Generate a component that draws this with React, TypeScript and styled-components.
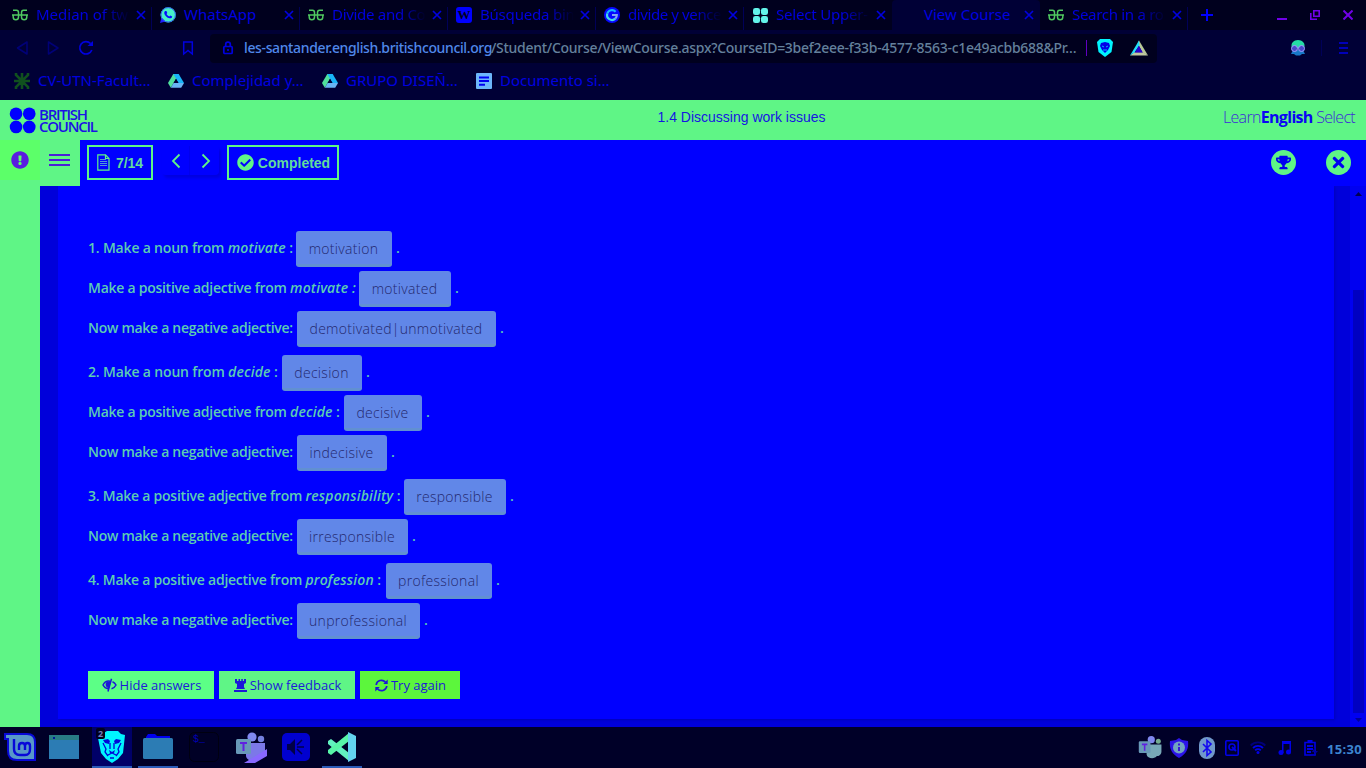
import React from 'react';
import styled, { createGlobalStyle } from 'styled-components';
import { FaCheckCircle, FaExclamationCircle, FaTrophy, FaTimes } from 'react-icons/fa';

const GREEN = '#5ff586';
const UI = '"Noto Sans", "Open Sans", sans-serif';

const Global = createGlobalStyle`
  * { box-sizing: border-box; }
  body { margin: 0; background: #0000ff; overflow: hidden; }
  svg { display: block; flex: none; }
`;

const Screen = styled.div`
  width: 1366px; height: 768px; display: flex; flex-direction: column; overflow: hidden;
  font-family: ${UI};
`;

/* Browser chrome */
const TabStrip = styled.div`
  height: 30px; flex: none; display: flex; padding-left: 4px; background: #00001e;
`;
const Tab = styled.div<{ $active?: boolean }>`
  width: 148px; height: 30px; display: flex; align-items: center; padding: 0 6px 0 8px;
  background: ${p => (p.$active ? '#000036' : 'transparent')};
  border-radius: ${p => (p.$active ? '4px 4px 0 0' : '0')};
`;
const TabRule = styled.div<{ $on: boolean }>`
  width: 1px; height: 23px; margin: 7px 0 0 -1px; background: ${p => (p.$on ? '#000058' : 'transparent')};
`;
const TabTitle = styled.div<{ $fade?: boolean; $ls?: number }>`
  width: 97px; margin: 0 3px 0 8px; padding-bottom: 2px; white-space: nowrap; font-size: 15px; line-height: 22px;
  letter-spacing: ${p => p.$ls ?? 0}px; color: #0000e0;
  mask-image: ${p => (p.$fade ? 'linear-gradient(90deg, #000 68%, transparent 97%)' : 'none')};
`;
const Slot = styled.div`
  width: 16px; height: 16px; flex: none; display: flex; align-items: center; justify-content: center;
`;
const WindowControls = styled.div`
  margin-left: auto; display: flex; align-items: center; gap: 23px; padding-right: 13px;
`;
const PlusSlot = styled.div`
  display: flex; align-items: center; padding-left: 12px;
`;
const NavBar = styled.div`
  height: 36px; flex: none; display: flex; align-items: center; background: #000036; padding-left: 15px;
`;
const NavIcons = styled.div`
  width: 195px; display: flex; align-items: center; gap: 16px;
`;
const BookmarkSlot = styled.div`
  margin-left: auto; margin-right: 14px;
`;
const UrlBox = styled.div`
  width: 947px; height: 29px; display: flex; align-items: center; background: #00001e; border-radius: 4px; padding-left: 12px;
`;
const UrlText = styled.div`
  width: 834px; margin-left: 10px; display: flex; font-size: 14px; line-height: 22px; white-space: nowrap; color: #64809c;
`;
const UrlHost = styled.span`
  width: 247px; color: #5088ea; font-weight: 500; letter-spacing: -0.37px;
`;
const UrlPath = styled.span`
  font-weight: 500; letter-spacing: -0.28px;
`;
const UrlRule = styled.div`
  width: 1px; height: 16px; margin-right: 10px; background: #6000c0;
`;
const NavRight = styled.div`
  margin-left: auto; display: flex; align-items: center; padding-right: 14px; gap: 14px;
`;
const ThinRule = styled.div`
  width: 1px; height: 16px; margin-left: 1px; background: #000058;
`;
const Bookmarks = styled.div`
  height: 34px; flex: none; display: flex; align-items: center; background: #000036; padding: 0 0 5px 14px;
`;
const Bookmark = styled.div<{ $w: number }>`
  width: ${p => p.$w}px; display: flex; align-items: center; gap: 8px; white-space: nowrap;
  font-size: 15px; line-height: 21px; color: #0000e0;
`;

/* Course page */
const Header = styled.header`
  height: 40px; flex: none; display: grid; grid-template-columns: 360px 1fr 360px; align-items: center;
  background: ${GREEN}; color: #0a0af0;
`;
const Brand = styled.div`
  display: flex; align-items: center; gap: 3px; padding-left: 9px;
`;
const BrandText = styled.div`
  font: 600 15px/12px "Open Sans", sans-serif; letter-spacing: -1.25px; color: #1c12e4;
`;
const Title = styled.div`
  text-align: center; font: 14px/20px "Liberation Sans", Arial, sans-serif; padding: 0 0 7px 117px; color: #1616e0;
  white-space: nowrap;
`;
const Product = styled.div`
  text-align: right; padding: 0 11px 7px 0; font: 300 16px/20px "Open Sans", sans-serif; letter-spacing: -0.68px; color: #3c2bd8;
  b { font-weight: 700; color: #0a06f4; }
`;
const Page = styled.div`
  height: 587px; flex: none; display: flex;
`;
const Side = styled.aside`
  width: 40px; background: ${GREEN};
`;
const Alert = styled.div`
  width: 40px; height: 40px; display: flex; align-items: center; justify-content: center; padding-right: 1px;
  background: #5cff69; color: #5a1ce0;
`;
const Main = styled.main`
  flex: 1; display: flex; flex-direction: column; background: #0000da;
`;
const Toolbar = styled.div`
  height: 46px; display: flex; background: #0000ff; padding-right: 15px;
`;
const Burger = styled.div`
  width: 40px; height: 46px; display: flex; flex-direction: column; align-items: center; gap: 3px; padding: 14px 2px 0 0; background: ${GREEN};
`;
const BurgerLine = styled.i`
  width: 21px; height: 2px; background: #4a1ed8;
`;
const Outlined = styled.div<{ $w: number }>`
  width: ${p => p.$w}px; height: 35px; margin-top: 5px; display: flex; align-items: center; justify-content: center;
  border: 2px solid ${GREEN}; color: #62dc9c; font: 700 14px/20px "Liberation Sans", Arial, sans-serif; white-space: nowrap;
`;
const Pager = styled.div`
  display: flex; height: 29px; margin: 6px 8px 0 9px; box-shadow: 2px 3px 3px #0000e0; border-radius: 4px;
`;
const PagerButton = styled.div`
  width: 28px; display: flex; align-items: center; justify-content: center; border-right: 1px solid #0000ee;
  &:last-child { border-right: 0; width: 29px; padding-left: 2px; }
`;
const Round = styled.div`
  width: 25px; height: 25px; border-radius: 50%; display: flex; align-items: center; justify-content: center;
  background: ${GREEN}; color: #0000f0;
`;
const RoundGroup = styled.div`
  margin-left: auto; margin-top: 10px; display: flex; gap: 30px;
`;
const Content = styled.div`
  height: 541px; display: flex; padding-left: 18px;
`;
const Panel = styled.section`
  width: 1276px; height: 533px; background: #0000ff; padding: 45px 30px 0; box-shadow: 1px 1px 3px #0000b8;
  clip-path: inset(0 -5px -5px 0);
`;
const Group = styled.div`
  display: flex; flex-direction: column; gap: 4px; margin-bottom: 8px;
`;
const Line = styled.div`
  height: 36px; display: flex; font: 600 14px/34px "Open Sans", sans-serif; color: #5ccdb2; white-space: nowrap;
`;
const Prompt = styled.div<{ $w: number; $ls: number }>`
  width: ${p => p.$w}px; letter-spacing: ${p => p.$ls}px;
  em { font-style: italic; letter-spacing: 0.14px; }
`;
const Answer = styled.div<{ $w: number }>`
  width: ${p => p.$w}px; height: 36px; margin-right: 4px; padding-right: 1px; border-radius: 3px; text-align: center;
  background: #6187e8; border-bottom: 3px solid #6190d2; color: #24276e;
  font: 300 14px/36px "Open Sans", sans-serif; letter-spacing: 0.3px;
`;
const Actions = styled.div`
  display: flex; gap: 5px; margin-top: 32px;
`;
const Action = styled.div<{ $w: number; $bg: string }>`
  width: ${p => p.$w}px; height: 28px; display: flex; align-items: center; justify-content: center; gap: 3px;
  padding-left: 1px; background: ${p => p.$bg}; color: #1c18d8; font: 13px/28px "Open Sans", sans-serif; white-space: nowrap;
`;
const Scrollbar = styled.div`
  width: 16px; height: 541px; margin-left: 16px; display: flex; flex-direction: column; align-items: center;
  padding-top: 6px; background: #0000f1;
`;
const Thumb = styled.div`
  width: 11px; height: 423px; margin: 94px 0 5px 1px; background: #0000c2;
`;

/* Desktop panel */
const Taskbar = styled.footer`
  height: 41px; flex: none; display: flex; background: #000028;
`;
const Task = styled.div<{ $w: number; $bg?: string; $line?: boolean }>`
  width: ${p => p.$w}px; height: 41px; display: flex; align-items: center; justify-content: center; position: relative;
  background: ${p => p.$bg ?? 'transparent'};
  border-bottom: 2px solid ${p => (p.$line ? '#2b5bb8' : 'transparent')};
`;
const Count = styled.span`
  position: absolute; left: 4px; top: 1px; width: 9px; height: 11px; border-radius: 2px; background: #00001e;
  font: 700 9px/11px "Noto Sans", sans-serif; text-align: center; color: #7878c0;
`;
const Tray = styled.div`
  margin-left: auto; display: flex; align-items: center;
`;
const TrayItem = styled.div<{ $w: number }>`
  width: ${p => p.$w}px; display: flex; align-items: center; justify-content: center;
`;
const Clock = styled.div`
  width: 41px; padding: 3px 0 0 2px; font: 700 13px/18px "Noto Sans", sans-serif; letter-spacing: 0.3px; color: #3c84d0;
`;

const Close = () => (
  <svg width="10" height="10" viewBox="0 0 10 10" stroke="#0000e0" strokeWidth="1.7"><path d="M1 1L9 9M9 1L1 9" /></svg>
);
const Gfg = () => (
  <svg width="16" height="12" viewBox="0 0 16 12" fill="none" stroke="#4fc860" strokeWidth="1.5">
    <path d="M0 6H16M1 1.200H4.500Q6.500 1.200 6.500 3.500V8Q6.500 10.800 3.800 10.800Q1.200 10.800 1.200 8V6M15 1.200H11.500Q9.500 1.200 9.500 3.500V8Q9.500 10.800 12.200 10.800Q14.800 10.800 14.800 8V6" />
  </svg>
);
const WhatsIcon = () => (
  <svg width="16" height="16" viewBox="0 0 16 16">
    <circle cx="8.2" cy="7.8" r="7.6" fill="#46efc8" /><path d="M0 16L1.5 10.5L5.5 14.5Z" fill="#2020ff" />
    <circle cx="8.2" cy="7.8" r="7.2" fill="none" stroke="#3060f0" />
    <path d="M5.2 4.1l1.2-.2.9 2-.8 1c.7 1.3 1.5 2 2.8 2.6l1-1 1.9 1c-.1 1.4-1.3 2-2.5 1.8-2.8-.6-5.2-3-5.5-5.4 0-.8.4-1.5 1-1.8Z" fill="#0808ff" />
  </svg>
);
const WikiIcon = () => (
  <svg width="16" height="16" viewBox="0 0 16 16"><rect width="16" height="16" rx="3" fill="#0000ff" />
    <text x="8" y="12.4" textAnchor="middle" fontFamily="Liberation Serif" fontSize="13" fontWeight="700" fill="#00001e">W</text></svg>
);
const GoogleIcon = () => (
  <svg width="16" height="16" viewBox="0 0 16 16"><circle cx="8" cy="8" r="8" fill="#0808ff" />
    <path d="M11.6 4.7A4.9 4.9 0 0 0 3.3 6.5" fill="none" stroke="#18b8ff" strokeWidth="2.2" />
    <path d="M3.3 6.5A4.9 4.9 0 0 0 11.3 11.6" fill="none" stroke="#42d8ea" strokeWidth="2.2" />
    <path d="M11.3 11.6A4.8 4.8 0 0 0 12.8 8H8" fill="none" stroke="#80a8f0" strokeWidth="2.2" /></svg>
);
const Dots = ({ size, color }: { size: number; color: string }) => (
  <svg width={size} height={size} viewBox="0 0 26 26" fill={color}>
    <circle cx="6.8" cy="6.5" r="6.1" /><circle cx="19.5" cy="6.5" r="6.1" /><circle cx="6.8" cy="19.2" r="6.1" /><circle cx="19.5" cy="19.2" r="6.1" />
  </svg>
);
const CloverIcon = () => (
  <svg width="15" height="15" viewBox="0 0 16 16" fill="#63f3ea">
    <rect width="7.5" height="7.5" rx="2.5" /><rect x="8.5" width="7.5" height="7.5" rx="2.5" /><rect y="8.5" width="7.5" height="7.5" rx="2.5" /><rect x="8.5" y="8.5" width="7.5" height="7.5" rx="2.5" />
  </svg>
);
const Drive = () => (
  <svg width="16" height="16" viewBox="0 0 16 16">
    <path d="M5.3 1H10.7L5.6 10L2.8 14.7L0 10Z" fill="#4fe09c" /><path d="M5.3 1H10.7L16 10H10.5Z" fill="#18b4f8" />
    <path d="M5.6 10H16L13.2 14.8H2.8Z" fill="#68b4f4" /><path d="M8 5.8L10.4 10H5.6Z" fill="#000036" />
  </svg>
);
const Doc = () => (
  <svg width="16" height="16" viewBox="0 0 16 16"><rect width="16" height="16" rx="1" fill="#6cb6fa" />
    <path d="M3 4.5H13M3 8H13M3 11.8H9" stroke="#0000f0" strokeWidth="2" /></svg>
);
const Utn = () => (
  <svg width="16" height="16" viewBox="0 0 16 16" fill="none" stroke="#10501e" strokeWidth="2.6">
    <path d="M8 0V16M0 8H16M2 0V2L8 8L14 2V0M2 16V14L8 8L14 14V16" /></svg>
);
const Vscode = () => (
  <svg width="30" height="30" viewBox="0 0 30 30">
    <path d="M1 9L4 7L22 21V29L1 12Z" fill="#62f2c0" /><path d="M1 21L4 23L22 9V1L1 18Z" fill="#58f5a8" />
    <path d="M21 0L29 4V26L21 30Z" fill="#63d4f0" />
  </svg>
);
const Teams = ({ size, banner }: { size: number; banner?: boolean }) => (
  <svg width={size} height={size} viewBox="0 0 32 32">
    <circle cx="17" cy="6" r="4.6" fill="#8088f0" /><circle cx="26" cy="8" r="3.2" fill={banner ? '#7480e0' : '#74ac90'} />
    <path d="M11 12H30V21C30 25 27 27 24 27C22 31 12 31 11 25Z" fill={banner ? '#7c78e8' : '#78a8b8'} />
    <rect x="1" y="8" width="15" height="15" rx="1.500" fill="#6898b8" />
    <path d="M5 12H12M8.500 12V20" stroke="#6020e0" strokeWidth="2" fill="none" />
    {banner && <path d="M9 32L32 18V25L20 32Z" fill="#8868ff" />}
  </svg>
);

const tabs = [
  { t: 'Median of tw', i: <Gfg />, f: true, ls: 0 }, { t: 'WhatsApp', i: <WhatsIcon /> },
  { t: 'Divide and Co', i: <Gfg />, f: true, ls: -0.3 },
  { t: 'Búsqueda bin', i: <WikiIcon />, f: true, ls: -0.2 }, { t: 'divide y vence', i: <GoogleIcon />, f: true, ls: -0.4 },
  { t: 'Select Upper-', i: <CloverIcon />, f: true, ls: -0.2 }, { t: 'View Course', i: null, a: true },
  { t: 'Search in a ro', i: <Gfg />, f: true, ls: -0.3 },
];

type Row = { pre: string; em?: string; post?: string; w: number; a: string; aw: number; ls?: number };
const NEG = 'Now make a negative adjective:';
const groups: Row[][] = [
  [
    { pre: '1. Make a noun from ', em: 'motivate', post: ' :', w: 208, a: 'motivation', aw: 96, ls: -0.19 },
    { pre: 'Make a positive adjective from ', em: 'motivate :', w: 271, a: 'motivated', aw: 92 },
    { pre: NEG, w: 209, a: 'demotivated|unmotivated', aw: 199, ls: -0.29 },
  ],
  [
    { pre: '2. Make a noun from ', em: 'decide', post: ' :', w: 194, a: 'decision', aw: 80, ls: -0.17 },
    { pre: 'Make a positive adjective from ', em: 'decide', post: ' :', w: 256, a: 'decisive', aw: 78 },
    { pre: NEG, w: 209, a: 'indecisive', aw: 90, ls: -0.29 },
  ],
  [
    { pre: '3. Make a positive adjective from ', em: 'responsibility', post: ' :', w: 316, a: 'responsible', aw: 102, ls: -0.24 },
    { pre: NEG, w: 209, a: 'irresponsible', aw: 111, ls: -0.29 },
  ],
  [
    { pre: '4. Make a positive adjective from ', em: 'profession', post: ' :', w: 298, a: 'professional', aw: 106, ls: -0.24 },
    { pre: NEG, w: 209, a: 'unprofessional', aw: 123, ls: -0.29 },
  ],
];

export default function App() {
  return (
    <Screen>
      <Global />
      <TabStrip>
        {tabs.map((t, n) => (
          <React.Fragment key={n}>
            <Tab $active={t.a}><Slot>{t.i}</Slot><TabTitle $fade={t.f} $ls={t.ls}>{t.t}</TabTitle><Close /></Tab>
            <TabRule $on={n !== 5 && n !== 6} />
          </React.Fragment>
        ))}
        <PlusSlot><svg width="14" height="14" viewBox="0 0 14 14" stroke="#0000ff" strokeWidth="2"><path d="M1 7H13M7 1V13" /></svg></PlusSlot>
        <WindowControls>
          <svg width="10" height="10" viewBox="0 0 10 10"><path d="M0 9H10" stroke="#7000e8" strokeWidth="2" /></svg>
          <svg width="10" height="10" viewBox="0 0 10 10" fill="none" stroke="#7000e8" strokeWidth="1.600"><path d="M3.800 .8H9.200V6.200H3.800ZM.8 3V9.200H7" /></svg>
          <svg width="10" height="10" viewBox="0 0 10 10" stroke="#7000e8" strokeWidth="2"><path d="M.5 .5L9.500 9.500M9.500 .5L.5 9.500" /></svg>
        </WindowControls>
      </TabStrip>
      <NavBar>
        <NavIcons>
          <svg width="14" height="16" viewBox="0 0 14 16" fill="none" stroke="#000078" strokeWidth="1.500"><path d="M12 2V14L2.500 8Z" strokeLinejoin="round" /></svg>
          <svg width="16" height="16" viewBox="0 0 16 16" fill="none" stroke="#000078" strokeWidth="1.500"><path d="M3.500 2V14L13 8Z" strokeLinejoin="round" /></svg>
          <svg width="18" height="16" viewBox="-1 0 18 16" fill="none" stroke="#0000e0" strokeWidth="1.700"><path d="M13.800 10A6.200 6.200 0 1 1 12.500 3.500" /><path d="M9.500 6H15V1Z" fill="#0000e0" stroke="none" /></svg>
          <BookmarkSlot><svg width="16" height="16" viewBox="0 0 16 16" fill="none" stroke="#0000e0" strokeWidth="1.500"><path d="M3.700 2H12.300V14L8 10.500L3.700 14Z" /></svg></BookmarkSlot>
        </NavIcons>
        <UrlBox>
          <svg width="12" height="14" viewBox="0 0 12 14" fill="none" stroke="#0000e0" strokeWidth="1.700"><rect x="1.800" y="5.500" width="8.400" height="7" rx="1" /><path d="M3.700 5.500V3.500A2.300 2.300 0 0 1 8.300 3.500V5.500M6 8V10" /></svg>
          <UrlText><UrlHost>les-santander.english.britishcouncil.org</UrlHost><UrlPath>/Student/Course/ViewCourse.aspx?CourseID=3bef2eee-f33b-4577-8563-c1e49acbb688&amp;Pr…</UrlPath></UrlText>
          <svg width="8" height="1" /><UrlRule />
          <svg width="16" height="18" viewBox="0 0 16 18"><path d="M3 0H13L16 3L14.500 13L8 18L1.500 13L0 3Z" fill="#00f4ff" /><path d="M4 4L8 3L12 4L13 7L11 11L8 14L5 11L3 7Z" fill="#0000e8" /><path d="M5 7L7 8M11 7L9 8M6 11H10" stroke="#00b8ff" /></svg>
          <svg width="17" height="1" />
          <svg width="18" height="16" viewBox="0 0 19 16"><path d="M9.500 0L19 16L13 12.500L8 3Z" fill="#b8c898" /><path d="M0 16H19L14 12.500H4.500Z" fill="#c0c8a0" /><path d="M9.500 0L0 16L5 12.500L10 5Z" fill="#20dff8" /><path d="M9.300 5.500L13.500 12.700H5Z" fill="#2800d0" /></svg>
        </UrlBox>
        <NavRight>
          <svg width="16" height="16" viewBox="0 0 16 16"><path d="M2 8C0 3 4 0 8 0S16 3 14 8Z" fill="#24dca4" /><path d="M3 10L1 14H4L6 15.500H10L12 14H15L13 10Z" fill="#1878c8" /><circle cx="4.500" cy="8.500" r="3" fill="#4848c8" stroke="#a0a0ff" /><circle cx="11.500" cy="8.500" r="3" fill="#4848c8" stroke="#a0a0ff" /></svg>
          <ThinRule />
          <svg width="16" height="14" viewBox="0 0 16 14" stroke="#0000b8" strokeWidth="2"><path d="M3 2H12M3 7H12M3 12H12" /></svg>
        </NavRight>
      </NavBar>
      <Bookmarks>
        <Bookmark $w={154}><Utn />CV-UTN-Facult…</Bookmark>
        <Bookmark $w={154}><Drive />Complejidad y…</Bookmark>
        <Bookmark $w={154}><Drive />GRUPO DISEÑ…</Bookmark>
        <Bookmark $w={154}><Doc />Documento si…</Bookmark>
      </Bookmarks>

      <Header>
        <Brand><Dots size={27} color="#0000ff" /><BrandText>BRITISH<br />COUNCIL</BrandText></Brand>
        <Title>1.4 Discussing work issues</Title>
        <Product>Learn<b>English</b> Select</Product>
      </Header>
      <Page>
        <Side><Alert><FaExclamationCircle size={18} /></Alert></Side>
        <Main>
          <Toolbar>
            <Burger><BurgerLine /><BurgerLine /><BurgerLine /></Burger>
            <svg width="7" height="1" />
            <Outlined $w={66}>
              <svg width="13" height="17" viewBox="0 0 13 17" fill="none" stroke={GREEN} strokeWidth="1.200"><path d="M.8 .8H8.500L12 4.500V16.200H.8ZM8.500 .8V4.500H12" /><path d="M3 5.500H9M3 7.500H10M3 9.500H10M3 11.500H10" stroke="#5094d8" /></svg>
              <svg width="6" height="1" />7/14
            </Outlined>
            <Pager>
              <PagerButton><svg width="10" height="16" viewBox="0 0 10 16" fill="none" stroke={GREEN} strokeWidth="1.800"><path d="M8.500 1.500L2 8L8.500 14.500" /></svg></PagerButton>
              <PagerButton><svg width="10" height="16" viewBox="0 0 10 16" fill="none" stroke={GREEN} strokeWidth="1.800"><path d="M1.500 1.500L8 8L1.500 14.500" /></svg></PagerButton>
            </Pager>
            <Outlined $w={112}><svg width="1" height="1" /><FaCheckCircle size={17} color={GREEN} /><svg width="4" height="1" />Completed</Outlined>
            <RoundGroup><Round><FaTrophy size={15} /></Round><Round><FaTimes size={17} /></Round></RoundGroup>
          </Toolbar>
          <Content>
            <Panel>
              {groups.map((g, gi) => (
                <Group key={gi}>
                  {g.map((r, ri) => (
                    <Line key={ri}>
                      <Prompt $w={r.w} $ls={r.ls ?? -0.26}>{r.pre}{r.em && <em>{r.em}</em>}{r.post}</Prompt>
                      <Answer $w={r.aw}>{r.a}</Answer>.
                    </Line>
                  ))}
                </Group>
              ))}
              <Actions>
                <Action $w={126} $bg="#5cff86">
                  <svg width="15" height="14" viewBox="0 0 15 14" fill="none" stroke="currentColor" strokeWidth="1.500"><path d="M6.500 11C4 10.500 2 9 1 7C2.500 4 5 2.800 8 3.200M10.500 3.800C12.200 4.500 13.300 5.600 14 7C13 9 11.500 10.200 9.500 10.800M9.500 .8L6 13.500" /><path d="M4.500 5L8 4L6.500 9.500C5 9 4 7.500 4.500 5Z" fill="currentColor" /></svg>
                  Hide answers
                </Action>
                <Action $w={136} $bg={GREEN}>
                  <svg width="13" height="13" viewBox="0 0 13 13" fill="currentColor"><path d="M1 0H3V2H4.500V0H6V2H7.300V0H8.800V2H10V0H12V4L10 5V8L11 10H2L3 8V5L1 4ZM0 11H13V13H0Z" /></svg>
                  Show feedback
                </Action>
                <Action $w={100} $bg="#5cf63c">
                  <svg width="13" height="13" viewBox="0 0 13 13" fill="none" stroke="currentColor" strokeWidth="1.700"><path d="M1.200 6A5.300 5.300 0 0 1 10.500 3.200M11.800 7A5.300 5.300 0 0 1 2.500 9.800" /><path d="M12.700 .5V5H8.200ZM.3 12.500V8H4.800Z" fill="currentColor" stroke="none" /></svg>
                  Try again
                </Action>
              </Actions>
            </Panel>
            <Scrollbar>
              <svg width="7" height="4"><path d="M0 4L3.500 0L7 4Z" fill="#000050" /></svg>
              <Thumb />
              <svg width="7" height="4"><path d="M0 0L3.500 4L7 0Z" fill="#000098" /></svg>
            </Scrollbar>
          </Content>
        </Main>
      </Page>

      <Taskbar>
        <Task $w={40}><svg width="32" height="30" viewBox="0 0 32 30" fill="none"><path d="M1 2H23C29 2 31 5 31 10V28H13C7 28 4 25 4 19V7H1Z" fill="#5898c8" stroke="#0808d8" strokeWidth="2" /><path d="M10 7V17C10 21 12 23 16 23H21C25 23 26 21 26 17V14C26 10 21 10 21 14V18V14C21 10 15 10 15 14V18" stroke="#0808d8" strokeWidth="2.400" /></svg></Task>
        <Task $w={48}><svg width="30" height="24" viewBox="0 0 30 24"><rect width="30" height="24" fill="#2c7cb4" /><rect width="30" height="5" fill="#287c84" /><rect x="4" y="2" width="2" height="2" fill="#001898" /></svg></Task>
        <svg width="4" height="1" />
        <Task $w={40} $bg="#000068" $line>
          <svg width="28" height="32" viewBox="0 0 28 32"><path d="M9 0H20L23 3L27 4L25 22L20 28L14 32L8 28L3 22L0 7L4 3Z" fill="#00f4ff" /><path d="M5 9L10 8L12 10L11 13L7 12ZM23 9L18 8L16 10L17 13L21 12ZM11 19L14 21L17 19L16 22H12Z" fill="#0008d8" /><path d="M5 12L8 18L7 21L10 25M23 12L20 18L21 21L18 25M12 12L12 18M16 12V18M10 24L14 22L18 24M12 27H16" stroke="#0008d8" strokeWidth="1.300" fill="none" /></svg>
          <Count>2</Count>
        </Task>
        <svg width="6" height="1" />
        <Task $w={40} $line><svg width="30" height="25" viewBox="0 0 30 25"><path d="M3 3L5 0H12L14 2H27V6H3Z" fill="#0000f0" /><rect y="4" width="30" height="21" rx="1.500" fill="#2c7cb4" /></svg></Task>
        <Task $w={52}><svg width="30" height="30" viewBox="0 0 30 30"><rect x=".5" y=".5" width="29" height="29" rx="5" fill="#000026" stroke="#000010" /><text x="4" y="10" fontFamily="Liberation Mono" fontSize="10" fill="#0000b8">$_</text></svg></Task>
        <Task $w={42}><Teams size={32} banner /></Task>
        <svg width="4" height="1" />
        <Task $w={40}><svg width="28" height="28" viewBox="0 0 28 28"><rect width="28" height="28" rx="5" fill="#0000d0" /><path d="M5 11H8L13 6V22L8 17H5Z" fill="#000048" /><path d="M15 12L20 7M15 14H22M15 16L20 21" stroke="#000048" strokeWidth="1.500" /></svg></Task>
        <svg width="6" height="1" />
        <Task $w={40} $line><Vscode /></Task>
        <Tray>
          <TrayItem $w={28}><Teams size={25} /></TrayItem>
          <TrayItem $w={29}><svg width="20" height="20" viewBox="0 0 20 20"><path d="M10 0L13 2L19 3C20 11 17 16 10 20C3 16 0 11 1 3L7 2Z" fill="#2c14e8" /><circle cx="10" cy="9.500" r="6" fill="#72a4c0" /><path d="M10 9V13M10 5.500V7.500" stroke="#3818d8" strokeWidth="2" /></svg></TrayItem>
          <TrayItem $w={27}><svg width="16" height="22" viewBox="0 0 16 22"><rect width="16" height="22" rx="8" fill="#7098cc" /><path d="M4 7L12 15L8 18.500V3.500L12 7L4 15" fill="none" stroke="#1408f0" strokeWidth="1.600" /></svg></TrayItem>
          <TrayItem $w={24}><svg width="14" height="16" viewBox="0 0 14 16" fill="none" stroke="#0000e8" strokeWidth="1.600"><rect x=".8" y=".8" width="12.400" height="14.400" rx="1" /><circle cx="7" cy="7" r="3" /><path d="M7 7L11 11" strokeWidth="2" /></svg></TrayItem>
          <TrayItem $w={28}><svg width="16" height="13" viewBox="0 0 16 13" fill="none" strokeWidth="1.800"><path d="M.7 4.500A10.300 10.300 0 0 1 15.300 4.500" stroke="#000078" /><path d="M3 7A7 7 0 0 1 13 7M5.200 9.300A4 4 0 0 1 10.800 9.300" stroke="#0000e8" /><circle cx="8" cy="11.500" r="1.500" fill="#0000e8" /></svg></TrayItem>
          <TrayItem $w={25}><svg width="13" height="14" viewBox="0 0 13 14" fill="#0000e8"><path d="M4 0H13V11H11.500V3H5.500V12H4Z" /><circle cx="3" cy="11.500" r="2.500" /><circle cx="10.500" cy="11" r="2.500" /></svg></TrayItem>
          <TrayItem $w={28}><svg width="14" height="16" viewBox="0 0 14 16"><path d="M1 2.500H11V15H1Z" fill="none" stroke="#0000e8" strokeWidth="1.600" /><path d="M3.500 0H8.500V3H3.500ZM3 5H9V7H3ZM3 8H9V10H3ZM3 11H7V13H3Z" fill="#0000e8" /><path d="M11 7L8 12H11L9 16L14 11H11Z" fill="#0000a0" /></svg></TrayItem>
          <Clock>15:30</Clock>
        </Tray>
      </Taskbar>
    </Screen>
  );
}
